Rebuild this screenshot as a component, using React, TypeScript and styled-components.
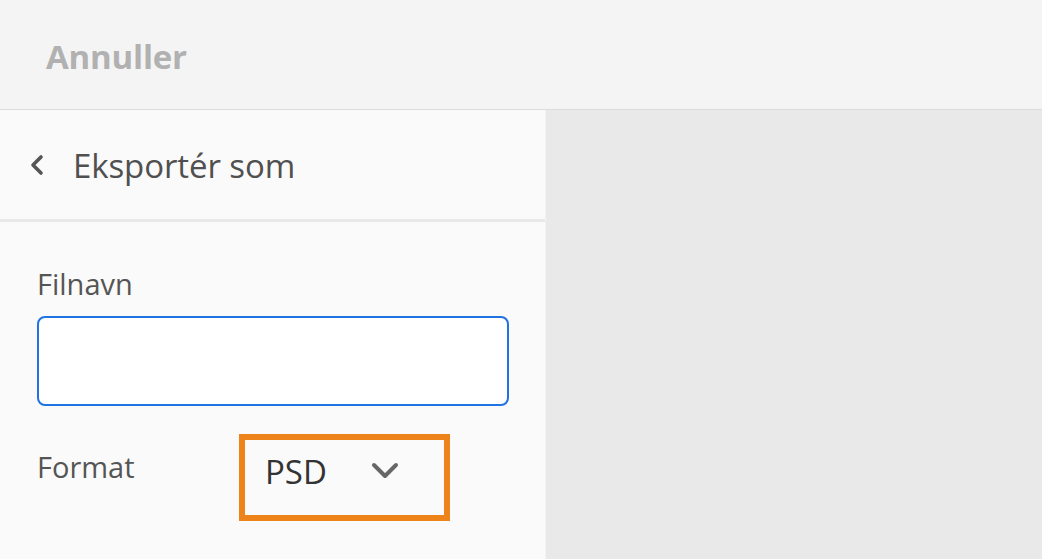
import React from "react";
import styled, { createGlobalStyle } from "styled-components";

const Global = createGlobalStyle`
	html, body {
		margin: 0;
		padding: 0;
		height: 100%;
		background: #e9e9e9;
		font-family: "Open Sans", "Noto Sans", sans-serif;
	}
	#root {
		height: 100%;
	}
`;

const Page = styled.div`
	height: 559px;
	display: flex;
	flex-direction: column;
	overflow: hidden;
`;

const TopBar = styled.header`
	height: 110px;
	flex: 0 0 auto;
	box-sizing: border-box;
	display: flex;
	align-items: center;
	padding: 0 46px;
	background: #f4f4f4;
	border-bottom: 1px solid #dcdcdc;
`;

const CancelButton = styled.button`
	background: none;
	border: none;
	padding: 0;
	margin-top: 4px;
	font-family: inherit;
	font-size: 33px;
	font-weight: 700;
	color: #b1b1b1;
	letter-spacing: -0.2px;
`;

const Body = styled.div`
	flex: 1;
	display: flex;
`;

const Panel = styled.aside`
	width: 545px;
	flex: 0 0 auto;
	background: #fafafa;
	border-right: 1px solid #f2f2f2;
`;

const PanelHeader = styled.div`
	height: 112px;
	box-sizing: border-box;
	display: flex;
	align-items: center;
	padding-left: 28px;
	border-bottom: 3px solid #e8e8e8;
`;

const BackIcon = styled.svg`
	width: 18px;
	height: 22px;
	margin-right: 27px;
	margin-top: 0;
`;

const PanelTitle = styled.h1`
	margin: 0;
	margin-top: 2px;
	font-size: 33px;
	font-weight: 400;
	color: #505050;
	letter-spacing: -0.1px;
`;

const Form = styled.div`
	padding: 42px 37px 0 37px;
`;

const Label = styled.label`
	display: block;
	font-size: 29px;
	font-weight: 400;
	color: #555;
	line-height: 40px;
`;

const TextInput = styled.input`
	display: block;
	box-sizing: border-box;
	width: 472px;
	height: 90px;
	margin-top: 12px;
	border: 2px solid #2172e2;
	border-radius: 8px;
	background: #fff;
	outline: none;
`;

const FormatRow = styled.div`
	display: flex;
	align-items: flex-start;
	margin-top: 28px;
`;

const FormatLabel = styled(Label)`
	width: 202px;
	margin-top: 13px;
`;

const SelectBox = styled.div`
	width: 211px;
	height: 87px;
	box-sizing: border-box;
	border: 6px solid #ee8419;
	display: flex;
	align-items: flex-start;
	padding: 10px 0 0 20px;
`;

const SelectValue = styled.span`
	font-size: 33px;
	color: #333;
	line-height: 44px;
	width: 106px;
`;

const ChevronDown = styled.svg`
	width: 28px;
	height: 18px;
	margin-top: 12px;
`;

const Canvas = styled.main`
	flex: 1;
	background: #e9e9e9;
`;

export default function App() {
	return (
		<Page>
			<Global />
			<TopBar>
				<CancelButton>Annuller</CancelButton>
			</TopBar>
			<Body>
				<Panel>
					<PanelHeader>
						<BackIcon viewBox="0 0 18 22">
							<path
								d="M13 3 L5 11 L13 19"
								fill="none"
								stroke="#555"
								strokeWidth="3.6"
								strokeLinecap="round"
								strokeLinejoin="round"
							/>
						</BackIcon>
						<PanelTitle>Eksportér som</PanelTitle>
					</PanelHeader>
					<Form>
						<Label>Filnavn</Label>
						<TextInput />
						<FormatRow>
							<FormatLabel>Format</FormatLabel>
							<SelectBox>
								<SelectValue>PSD</SelectValue>
								<ChevronDown viewBox="0 0 28 18">
									<path
										d="M3 3 L14 14 L25 3"
										fill="none"
										stroke="#666"
										strokeWidth="4"
										strokeLinecap="round"
										strokeLinejoin="round"
									/>
								</ChevronDown>
							</SelectBox>
						</FormatRow>
					</Form>
				</Panel>
				<Canvas />
			</Body>
		</Page>
	);
}
